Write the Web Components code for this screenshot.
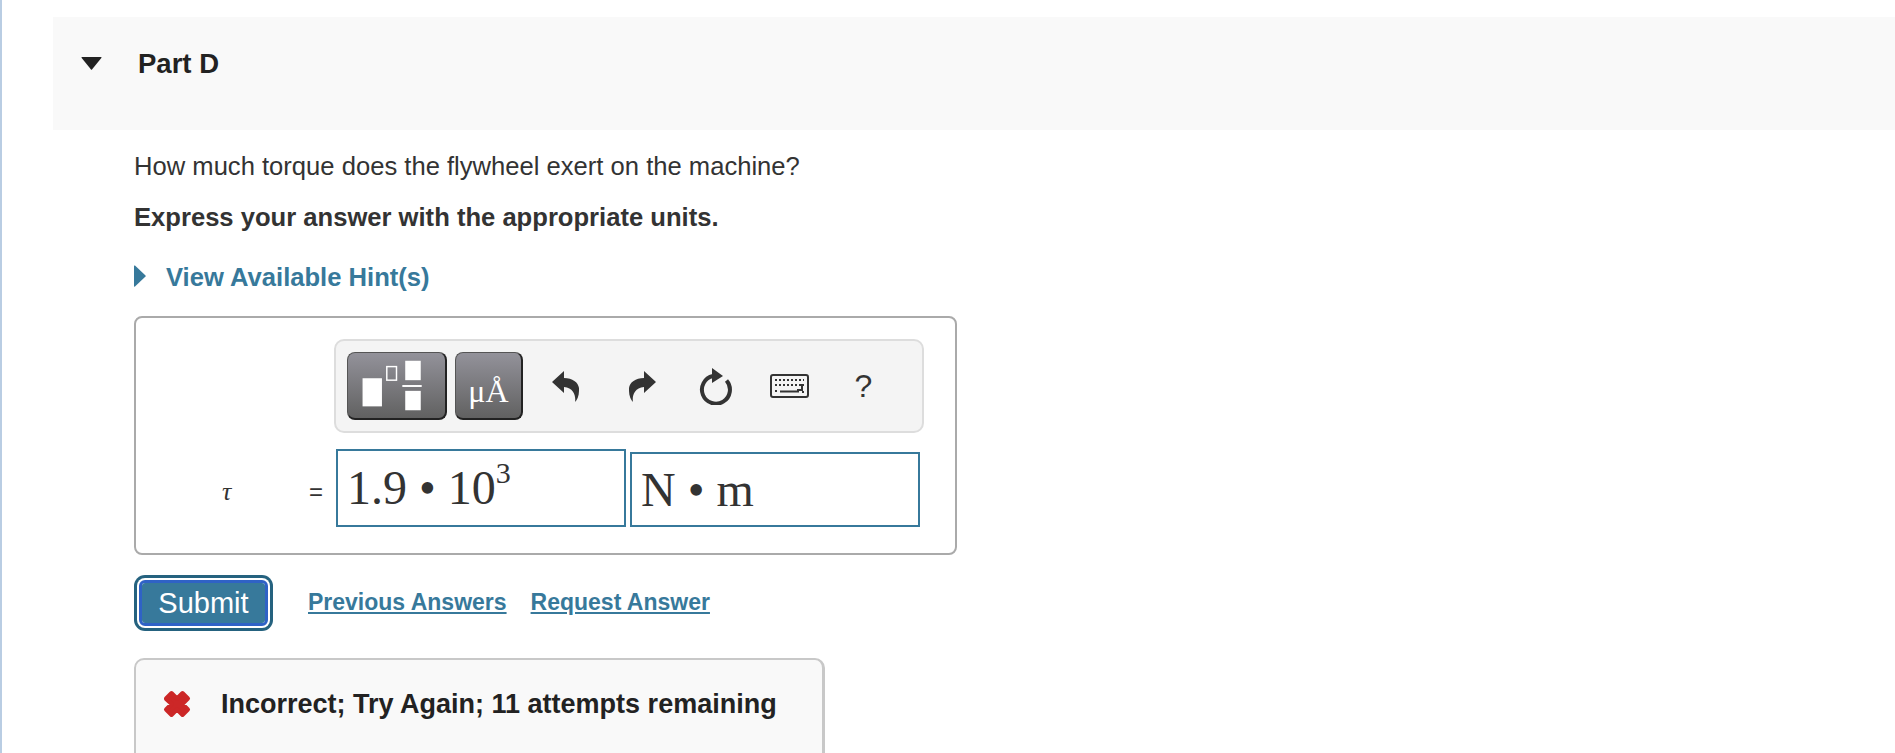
<!DOCTYPE html>
<html lang="en">
<head>
<meta charset="utf-8">
<title>Part D</title>
<style>
  html, body { margin: 0; height: 100%; overflow: hidden; background: #fff; }
  body { font-family: "Liberation Sans", Arial, sans-serif; color: #333; }
</style>
</head>
<body>
<part-page>
  <part-header slot="header">Part D</part-header>
  <prompt-text>How much torque does the flywheel exert on the machine?</prompt-text>
  <prompt-text strong>Express your answer with the appropriate units.</prompt-text>
  <hint-toggle>View Available Hint(s)</hint-toggle>
  <answer-box></answer-box>
  <action-row></action-row>
  <feedback-box>Incorrect; Try Again; 11 attempts remaining</feedback-box>
</part-page>

<script>
/** Page shell: thin blue edge on the left, header band and the question column. */
class PartPage extends HTMLElement {
  constructor () {
    super();
    this.attachShadow({ mode: 'open' }).innerHTML = `
      <style>
        :host { display: block; height: 753px; overflow: hidden; border-left: 2px solid #b9cde3; box-sizing: border-box; }
        .head { padding: 17px 0 0 51px; }
        .body { display: flex; flex-direction: column; align-items: flex-start; padding-left: 132px; }
      </style>
      <div class="head"><slot name="header"></slot></div>
      <div class="body"><slot></slot></div>
    `;
  }
}

class PartHeader extends HTMLElement {
  constructor () {
    super();
    this.attachShadow({ mode: 'open' }).innerHTML = `
      <style>
        :host { display: flex; align-items: flex-start; height: 113px; background: #f9f9f9; color: #222; box-sizing: border-box; padding: 31px 0 0 28px; font: bold 27.5px/32px "Liberation Sans", Arial, sans-serif; }
        svg { width: 21px; height: 13px; margin: 9px 36px 0 0; flex: none; }
      </style>
      <svg viewBox="0 0 21 13"><path d="M1 0H20Q21 0 20.300 1L11 12.500Q10.500 13 10 12.500L.7 1Q0 0 1 0Z" fill="#222"/></svg>
      <slot></slot>
    `;
  }
}

class PromptText extends HTMLElement {
  constructor () {
    super();
    this.attachShadow({ mode: 'open' }).innerHTML = `
      <style>
        :host { display: block; font: 25.6px/30px "Liberation Sans", Arial, sans-serif; color: #333; margin-top: 21px; }
        :host([strong]) { font-weight: bold; margin-top: 21px; }
      </style>
      <slot></slot>
    `;
  }
}

class HintToggle extends HTMLElement {
  constructor () {
    super();
    this.attachShadow({ mode: 'open' }).innerHTML = `
      <style>
        :host { display: flex; align-items: center; margin-top: 30px; font: bold 25.6px/30px "Liberation Sans", Arial, sans-serif; color: #37799b; }
        svg { width: 12px; height: 22px; margin-right: 20px; margin-top: -2px; flex: none; }
      </style>
      <svg viewBox="0 0 12 22"><path d="M0 1Q0 0 1 .6L11.500 10.400Q12 11 11.500 11.600L1 21.400Q0 22 0 21Z" fill="#37799b"/></svg>
      <slot></slot>
    `;
  }
}

/** One toolbar glyph button, the dark template buttons use the [dark] attribute. */
class ToolButton extends HTMLElement {
  constructor () {
    super();
    this.attachShadow({ mode: 'open' }).innerHTML = `
      <style>
        :host { display: flex; align-items: center; justify-content: center; flex: none; color: #333; }
        :host([dark]) { height: 68px; box-sizing: border-box; border-radius: 8px; background: linear-gradient(#93929a, #616161); border: 1px solid #555; border-right: 2px solid #222; border-bottom: 2px solid #222; color: #fff; }
      </style>
      <slot></slot>
    `;
  }
}

class MathToolbar extends HTMLElement {
  constructor () {
    super();
    this.attachShadow({ mode: 'open' }).innerHTML = `
      <style>
        :host { display: flex; align-items: center; box-sizing: border-box; width: 590px; height: 94px; margin-left: 198px; padding: 0 0 0 11px; background: #f4f4f4; border: 2px solid #ddd; border-radius: 10px; }
        .ua { font: 32px/1 "Liberation Serif", "Times New Roman", serif; padding-top: 10px; color: #fff; }
        .help { font: 32px/1 "Liberation Sans", Arial, sans-serif; color: #333; }
        svg { display: block; }
      </style>
      <tool-button dark style="width:100px">
        <svg width="100" height="66" viewBox="0 0 100 66" fill="#fff">
          <rect x="15" y="25" width="20" height="29"/>
          <rect x="40" y="13" width="10" height="14" fill="none" stroke="#fff" stroke-width="1.500"/>
          <rect x="59" y="7" width="16" height="20"/>
          <rect x="56" y="32" width="20" height="2"/>
          <rect x="59" y="38" width="16" height="20"/>
        </svg>
      </tool-button>
      <tool-button dark style="width:68px;margin-left:8px"><span class="ua">μÅ</span></tool-button>
      <tool-button style="width:27px;margin-left:29px">
        <svg width="27" height="31" viewBox="0 0 27 31"><path d="M0 11 12 0V7C22 7 28 13 27 20 27 25 25 29 23 31 24 25 22 17 12 16V22Z" fill="#333"/></svg>
      </tool-button>
      <tool-button style="width:27px;margin-left:50px">
        <svg width="27" height="31" viewBox="0 0 27 31"><path d="M27 11 15 0V7C5 7-1 13 0 20 0 25 2 29 4 31 3 25 5 17 15 16V22Z" fill="#333"/></svg>
      </tool-button>
      <tool-button style="width:34px;margin-left:42px">
        <svg width="34" height="38" viewBox="0 0 34 38" fill="none">
          <path d="M28.500 13.500A14 14 0 1 1 15 9" stroke="#333" stroke-width="4"/>
          <path d="M14 1 25 9 14 16Z" fill="#333"/>
        </svg>
      </tool-button>
      <tool-button style="width:39px;margin-left:38px">
        <svg width="39" height="24" viewBox="0 0 39 24">
          <rect x="1" y="1" width="37" height="22" rx="2" fill="#f4f4f4" stroke="#333" stroke-width="2"/>
          <path d="M5 6h29M5 11h29" stroke="#333" stroke-width="2" stroke-dasharray="2 2"/>
          <path d="M32 10v6h-5M5 17h2M10 17.500h19M32 18h2" stroke="#333" stroke-width="2" fill="none"/>
        </svg>
      </tool-button>
      <tool-button style="width:17px;margin-left:46px"><span class="help">?</span></tool-button>
    `;
  }
}

class MathInput extends HTMLElement {
  constructor () {
    super();
    this.attachShadow({ mode: 'open' }).innerHTML = `
      <style>
        :host { display: block; box-sizing: border-box; width: 290px; height: 75px; border: 2px solid #37799b; padding: 0 0 0 9px; font: 48px/71px "Liberation Serif", "Times New Roman", serif; color: #333; white-space: nowrap; flex: none; }
        :host([tall]) { height: 78px; line-height: 74px; }
      </style>
      <slot></slot>
    `;
  }
}

class AnswerBox extends HTMLElement {
  constructor () {
    super();
    this.attachShadow({ mode: 'open' }).innerHTML = `
      <style>
        :host { display: block; box-sizing: border-box; width: 823px; height: 239px; margin-top: 24px; padding-top: 21px; border: 2px solid #aaa; border-radius: 8px; }
        .row { display: flex; align-items: flex-end; margin-top: 16px; }
        .sym { width: 87px; margin-left: 86px; font: italic 26px/71px "Liberation Serif", "Times New Roman", serif; color: #333; flex: none; }
        .eq { width: 27px; font: 24px/71px "Liberation Sans", Arial, sans-serif; color: #333; flex: none; }
        .unit { margin-left: 4px; }
        sup { font-size: 30px; line-height: 0; vertical-align: 21px; }
      </style>
      <math-toolbar></math-toolbar>
      <div class="row">
        <span class="sym">τ</span>
        <span class="eq">=</span>
        <math-input tall>1.9 • 10<sup>3</sup></math-input>
        <math-input class="unit">N • m</math-input>
      </div>
    `;
  }
}

class ActionRow extends HTMLElement {
  constructor () {
    super();
    this.attachShadow({ mode: 'open' }).innerHTML = `
      <style>
        :host { display: flex; align-items: center; margin-top: 20px; font: bold 23px/28px "Liberation Sans", Arial, sans-serif; color: #37799b; }
        button { box-sizing: border-box; width: 139px; height: 56px; margin-right: 40px; padding: 0; background: #37799b; color: #fff; font: 29px/1 "Liberation Sans", Arial, sans-serif; border: 3px solid #2f62c6; border-radius: 6px; box-shadow: 0 0 0 2px #fff, 0 0 0 5px #25627f; background-clip: padding-box; }
        .wrap { padding: 5px; margin-right: -5px; }
        a { color: inherit; text-decoration: underline; margin-right: 24px; margin-top: -2px; }
      </style>
      <span class="wrap"><button type="button" style="width:129px;height:46px">Submit</button></span>
      <a href="#">Previous Answers</a>
      <a href="#">Request Answer</a>
    `;
  }
}

class FeedbackBox extends HTMLElement {
  constructor () {
    super();
    this.attachShadow({ mode: 'open' }).innerHTML = `
      <style>
        :host { display: flex; align-items: center; box-sizing: border-box; width: 691px; height: 120px; margin-top: 27px; padding: 0 0 28px 27px; background: #f9f9f9; border: 2px solid #c8c8c8; border-right: 3px solid #c8c8c8; border-radius: 10px; color: #222; font: bold 27px/32px "Liberation Sans", Arial, sans-serif; white-space: nowrap; }
        svg { width: 28px; height: 28px; margin-right: 30px; flex: none; }
      </style>
      <svg viewBox="0 0 28 28"><path d="M3 9 8.500 14 3 19.500 8.500 25 14 19.500 19.500 25 25 19.500 19.500 14 25 8.500 19.500 3 14 8.500 8.500 3 3 8.500Z" fill="#cc2727" stroke="#cc2727" stroke-width="4" stroke-linejoin="round"/></svg>
      <slot></slot>
    `;
  }
}

customElements.define('part-page', PartPage);
customElements.define('part-header', PartHeader);
customElements.define('prompt-text', PromptText);
customElements.define('hint-toggle', HintToggle);
customElements.define('tool-button', ToolButton);
customElements.define('math-toolbar', MathToolbar);
customElements.define('math-input', MathInput);
customElements.define('answer-box', AnswerBox);
customElements.define('action-row', ActionRow);
customElements.define('feedback-box', FeedbackBox);
</script>
</body>
</html>
